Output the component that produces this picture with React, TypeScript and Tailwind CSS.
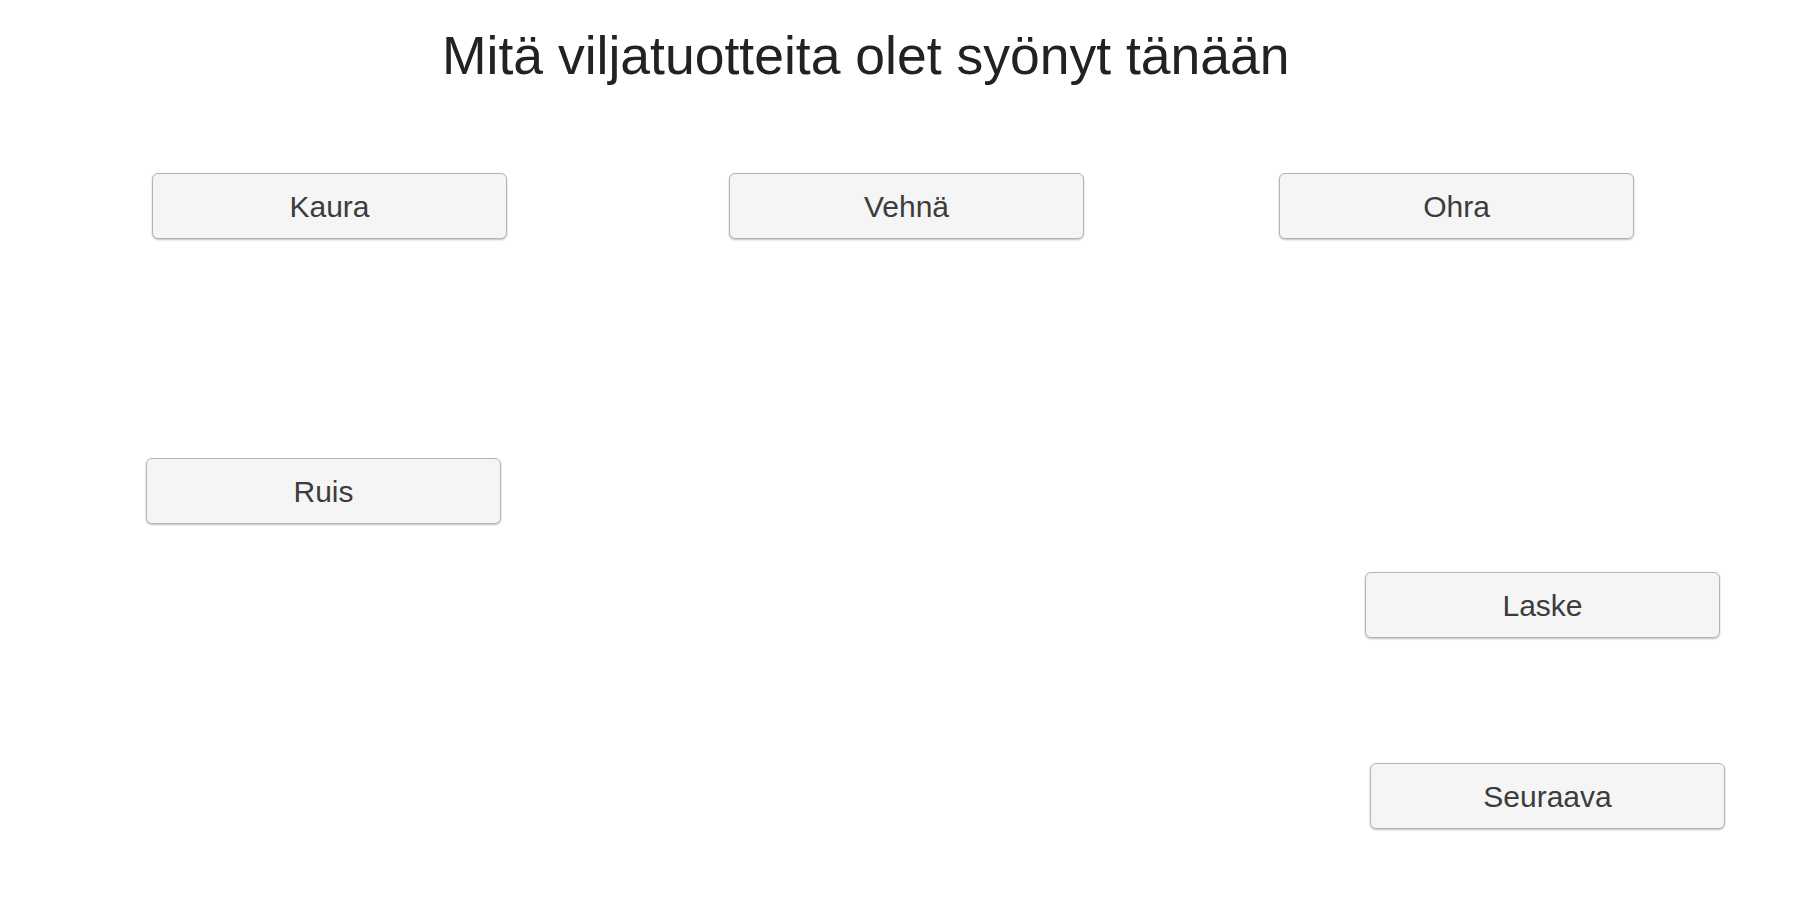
import React from "react";

const Btn = ({ label, className }: { label: string; className: string }) => {
  return (
    <button
      className={`flex h-[66px] w-[355px] shrink-0 items-center justify-center rounded-[6px] border border-[#b4b4b4] bg-[#f5f5f5] text-[30px] text-[#3c3c3c] shadow-[0_1px_2px_rgba(0,0,0,0.25)] ${className}`}
    >
      {label}
    </button>
  );
};

const App = () => {
  return (
    <div className="h-[900px] w-full overflow-hidden bg-white font-['Liberation_Sans',Arial,sans-serif]">
      <h1 className="pl-[442px] pt-[25px] text-[53.5px] leading-[61px] text-[#222]">
        Mitä viljatuotteita olet syönyt tänään
      </h1>

      <div className="mt-[87px] flex">
        <Btn label="Kaura" className="ml-[152px]" />
        <Btn label="Vehnä" className="ml-[222px]" />
        <Btn label="Ohra" className="ml-[195px]" />
      </div>

      <div className="mt-[219px] flex">
        <Btn label="Ruis" className="ml-[146px]" />
      </div>

      <div className="mt-[48px] flex">
        <Btn label="Laske" className="ml-[1365px]" />
      </div>

      <div className="mt-[125px] flex">
        <Btn label="Seuraava" className="ml-[1370px]" />
      </div>
    </div>
  );
};

export default App;
